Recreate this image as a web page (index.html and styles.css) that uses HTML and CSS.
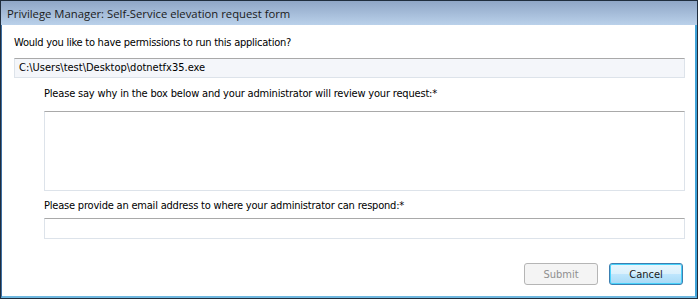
FILE: index.html
```html
<!DOCTYPE html>
<html>
<head>
<meta charset="utf-8">
<link rel="stylesheet" href="styles.css">
</head>
<body>
<div class="window">
  <div class="titlebar"><span class="title">Privilege Manager: Self-Service elevation request form</span></div>
  <div class="client">
    <p class="question">Would you like to have permissions to run this application?</p>
    <div class="path">C:\Users\test\Desktop\dotnetfx35.exe</div>
    <div class="indent">
      <p class="label">Please say why in the box below and your administrator will review your request:*</p>
      <div class="reason"></div>
      <p class="label label-email">Please provide an email address to where your administrator can respond:*</p>
      <div class="email"></div>
    </div>
    <div class="buttons">
      <div class="btn btn-disabled">Submit</div>
      <div class="btn btn-primary">Cancel</div>
    </div>
  </div>
</div>
</body>
</html>
```
FILE: styles.css
```css
html, body {
  margin: 0;
  padding: 0;
  width: 698px;
  height: 299px;
  overflow: hidden;
  background: #ffffff;
}
.window {
  box-sizing: border-box;
  width: 698px;
  height: 299px;
  border: 1px solid #1f2d3d;
  display: flex;
  flex-direction: column;
  font-family: "DejaVu Sans Condensed", "DejaVu Sans", sans-serif;
  font-size: 11px;
  color: #000;
}
.titlebar {
  height: 24px;
  flex: none;
  background: linear-gradient(#8fa6c6, #bad1ea);
  display: flex;
  align-items: center;
  padding-left: 6px;
}
.title {
  font-family: "Open Sans", sans-serif;
  font-size: 11.3px;
  color: #1a1a1a;
}
.client {
  flex: 1;
  background: #fff;
  border-left: 1px solid #3d6fa3;
  border-right: 2px solid #3fa3d9;
  border-bottom: 2px solid #6fb8e0;
  padding: 0 10px 0 12px;
  display: flex;
  flex-direction: column;
}
.question {
  margin: 11px 0 0 0;
  line-height: 14px;
  letter-spacing: -0.25px;
}
.path {
  margin-top: 8px;
  height: 20px;
  box-sizing: border-box;
  background: #f4f6fa;
  border: 1px solid #dde3ea;
  border-top-color: #a9a9a9;
  padding-left: 4px;
  line-height: 18px;
}
.indent {
  margin-left: 30px;
  display: flex;
  flex-direction: column;
}
.label {
  margin: 9px 0 0 0;
  line-height: 14px;
  letter-spacing: -0.18px;
}
.reason {
  margin-top: 10px;
  height: 80px;
  box-sizing: border-box;
  border: 1px solid #dde3ea;
  border-top-color: #a9a9a9;
}
.label-email {
  margin-top: 8px;
  letter-spacing: -0.2px;
}
.email {
  margin-top: 5px;
  height: 21px;
  box-sizing: border-box;
  border: 1px solid #dde3ea;
  border-top-color: #a9a9a9;
}
.buttons {
  margin-top: 24px;
  display: flex;
  justify-content: flex-end;
  gap: 11px;
  padding-right: 2px;
}
.btn {
  width: 74px;
  height: 22px;
  box-sizing: border-box;
  border-radius: 3px;
  display: flex;
  align-items: center;
  justify-content: center;
}
.btn-disabled {
  border: 1px solid #b5b5b5;
  background: #f4f4f4;
  color: #8f8f8f;
}
.btn-primary {
  border: 1px solid #3c7fb1;
  background: linear-gradient(#e8f6fd 0%, #d9f0fc 50%, #bee6fd 51%, #a7d9f5 100%);
  box-shadow: inset 0 0 0 1px #48d2fb;
  color: #1a1a1a;
}
```
